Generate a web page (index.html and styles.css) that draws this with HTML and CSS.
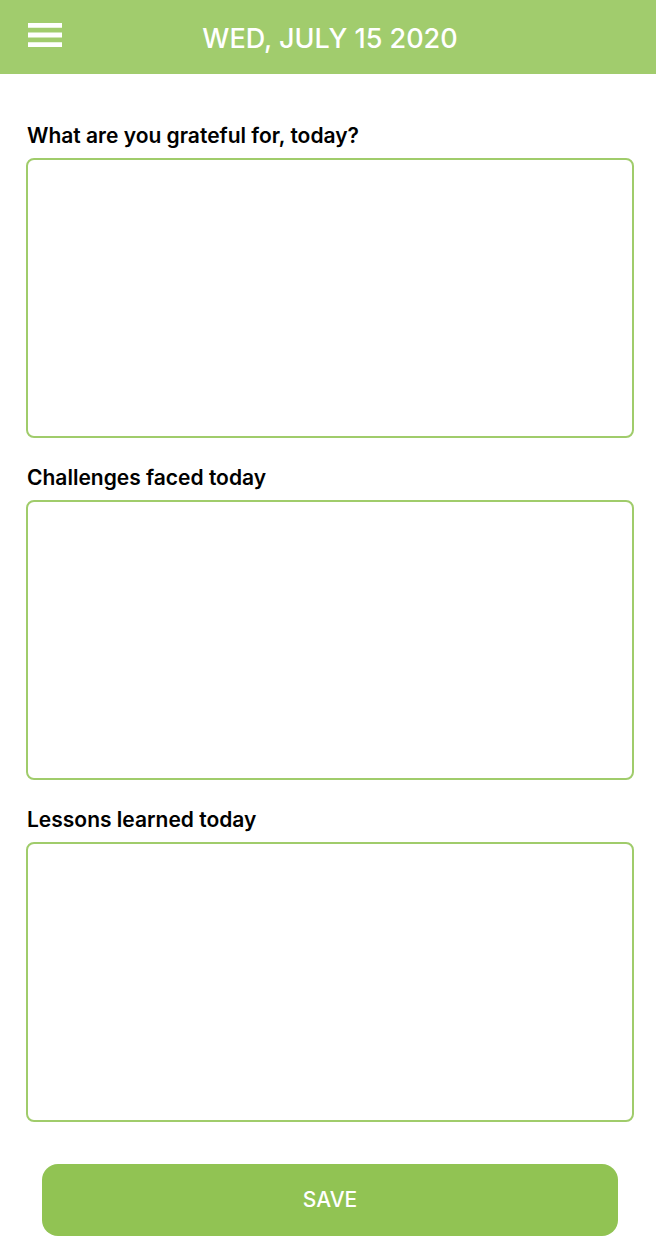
FILE: index.html
```html
<!DOCTYPE html>
<html lang="en">
<head>
<meta charset="utf-8">
<meta name="viewport" content="width=device-width, initial-scale=1">
<title>Daily Journal</title>
<link rel="stylesheet" href="styles.css">
</head>
<body>
<header class="topbar">
  <button class="menu" type="button" aria-label="Open menu">
    <svg class="menu-icon" viewBox="0 0 34 24" aria-hidden="true"><path d="M0 0H34V4.8H0zM0 9.6H34V14.4H0zM0 19.2H34V24H0z"/></svg>
  </button>
  <h1 class="date">WED, JULY 15 2020</h1>
</header>
<main>
  <form class="journal">
    <div class="field">
      <label for="grateful">What are you grateful for, today?</label>
      <textarea id="grateful" name="grateful"></textarea>
    </div>
    <div class="field">
      <label for="challenges">Challenges faced today</label>
      <textarea id="challenges" name="challenges"></textarea>
    </div>
    <div class="field">
      <label for="lessons">Lessons learned today</label>
      <textarea id="lessons" name="lessons"></textarea>
    </div>
    <button class="save" type="submit">SAVE</button>
  </form>
</main>
</body>
</html>
```

FILE: styles.css
```css
* {
  box-sizing: border-box;
}

body {
  margin: 0;
  background: #fff;
  color: #000;
  font-family: Inter, "Liberation Sans", sans-serif;
}

.topbar {
  display: grid;
  grid-template-columns: 36px 1fr 36px;
  align-items: center;
  padding: 21px 24px 17px 28px;
  background: #a1cc6d;
  color: #fff;
}

.menu {
  display: flex;
  padding: 0 0 8px;
  border: 0;
  background: none;
  color: inherit;
}

.menu-icon {
  width: 34px;
  height: 24px;
  fill: currentColor;
}

.date {
  margin: 0;
  font-size: 27px;
  font-weight: 500;
  line-height: 36px;
  text-align: center;
}

.journal {
  display: flex;
  flex-direction: column;
  gap: 26px;
  padding: 48px 22px 11px 26px;
}

.field {
  display: flex;
  flex-direction: column;
  gap: 8px;
}

.field label {
  padding-left: 1px;
  font-size: 21px;
  font-weight: 600;
  line-height: 28px;
}

.field textarea {
  height: 280px;
  padding: 12px;
  border: 2px solid #a0cc6b;
  border-radius: 8px;
  background: #fff;
  font: inherit;
  font-size: 21px;
  resize: none;
}

.save {
  margin: 16px 16px 0;
  padding: 22px;
  border: 0;
  border-radius: 16px;
  background: #91c353;
  color: #fff;
  font: inherit;
  font-size: 21px;
  font-weight: 500;
  line-height: 28px;
}
```
